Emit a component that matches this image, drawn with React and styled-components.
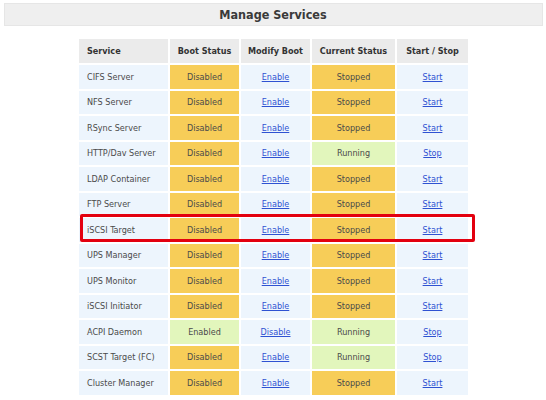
import React from "react";
import styled, { createGlobalStyle } from "styled-components";

const Global = createGlobalStyle`
  html, body { margin: 0; padding: 0; background: #ffffff; }
  body { font-family: "DejaVu Sans", Verdana, sans-serif; font-stretch: condensed; }
`;

const Page = styled.div`
  width: 546px;
  padding: 3px 3px 0 4px;
  box-sizing: border-box;
`;

const TitleBar = styled.div`
  height: 23px;
  background: #efefef;
  border: 1px solid #e6e6e6;
  box-sizing: border-box;
  display: flex;
  align-items: center;
  justify-content: center;
  padding-right: 1px;
`;

const Title = styled.h1`
  margin: 0;
  font-size: 12.5px;
  font-weight: bold;
  color: #3a3a3a;
`;

const TableWrap = styled.div`
  position: relative;
  width: 393px;
  margin: 11px 0 0 73px;
`;

const Table = styled.table`
  border-collapse: separate;
  border-spacing: 2px;
  width: 393px;
  table-layout: fixed;
  font-size: 9px;
`;

const Th = styled.th`
  background: #ebebeb;
  color: #333333;
  font-weight: bold;
  height: 24px;
  padding: 0;
  text-align: ${(p) => (p.$left ? "left" : "center")};
  padding-left: ${(p) => (p.$left ? "8px" : "0")};
`;

const Td = styled.td`
  height: 23.5px;
  padding: 0;
  color: #4a4a4a;
  text-align: ${(p) => (p.$left ? "left" : "center")};
  padding-left: ${(p) => (p.$left ? "8px" : "0")};
  background: ${(p) =>
    p.$tone === "warn" ? "#f7cd58" : p.$tone === "ok" ? "#e2f6bc" : "#edf5fd"};
`;

const Link = styled.a`
  color: #2f52d2;
  text-decoration: underline;
  cursor: pointer;
`;

const Highlight = styled.div`
  position: absolute;
  left: 3px;
  width: 395px;
  height: 28px;
  border: 3px solid #e3000f;
  border-radius: 2px;
  box-sizing: border-box;
  pointer-events: none;
`;

const services = [
  ["CIFS Server", false, false],
  ["NFS Server", false, false],
  ["RSync Server", false, false],
  ["HTTP/Dav Server", false, true],
  ["LDAP Container", false, false],
  ["FTP Server", false, false],
  ["iSCSI Target", false, false],
  ["UPS Manager", false, false],
  ["UPS Monitor", false, false],
  ["iSCSI Initiator", false, false],
  ["ACPI Daemon", true, true],
  ["SCST Target (FC)", false, true],
  ["Cluster Manager", false, false],
];

export default function App() {
  const hlIndex = 6;
  return (
    <Page>
      <Global />
      <TitleBar>
        <Title>Manage Services</Title>
      </TitleBar>
      <TableWrap>
        <Table>
          <colgroup>
            <col style={{ width: 89 }} />
            <col style={{ width: 69 }} />
            <col style={{ width: 69 }} />
            <col style={{ width: 83 }} />
            <col style={{ width: 71 }} />
          </colgroup>
          <thead>
            <tr>
              <Th $left>Service</Th>
              <Th>Boot Status</Th>
              <Th>Modify Boot</Th>
              <Th>Current Status</Th>
              <Th>Start / Stop</Th>
            </tr>
          </thead>
          <tbody>
            {services.map(([name, boot, running]) => (
              <tr key={name}>
                <Td $left>{name}</Td>
                <Td $tone={boot ? "ok" : "warn"}>{boot ? "Enabled" : "Disabled"}</Td>
                <Td>
                  <Link>{boot ? "Disable" : "Enable"}</Link>
                </Td>
                <Td $tone={running ? "ok" : "warn"}>{running ? "Running" : "Stopped"}</Td>
                <Td>
                  <Link>{running ? "Stop" : "Start"}</Link>
                </Td>
              </tr>
            ))}
          </tbody>
        </Table>
        <Highlight style={{ top: 2 + 24 + 2 + hlIndex * 25.5 - 4 }} />
      </TableWrap>
    </Page>
  );
}
